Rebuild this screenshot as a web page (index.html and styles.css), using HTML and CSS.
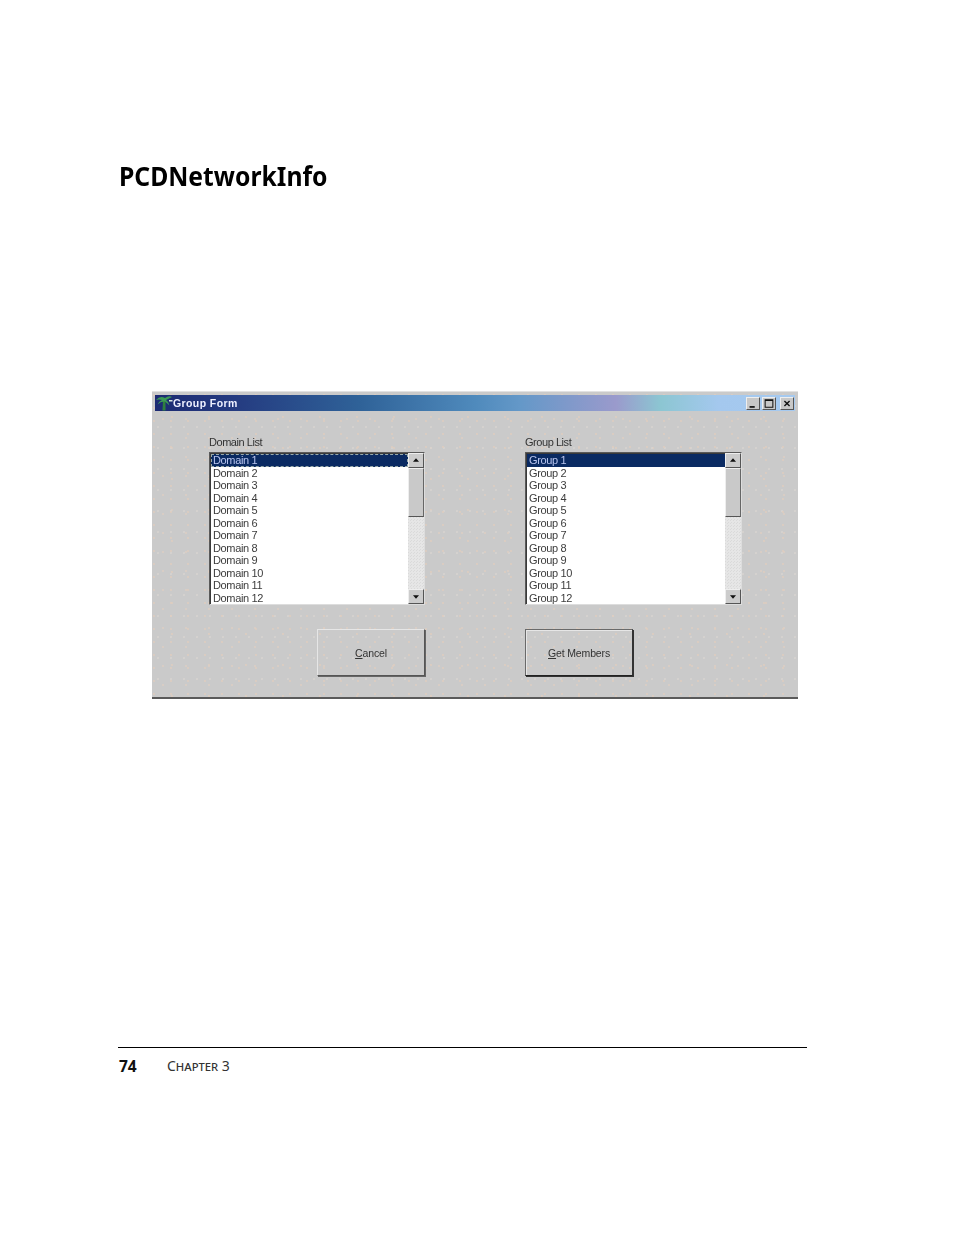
FILE: index.html
```html
<!DOCTYPE html>
<html lang="en">
<head>
<meta charset="utf-8">
<title>PCDNetworkInfo</title>
<link rel="stylesheet" href="styles.css">
</head>
<body>
<main class="page">
  <h1 class="heading">PCDNetworkInfo</h1>
  <section class="window">
    <header class="titlebar">
      <svg class="app-icon" viewBox="0 0 18 16" aria-hidden="true">
        <path d="M7.5 15.5 L8 6 L10.5 6 L10.5 15.5 Z" fill="#2f7f3f"/>
        <path d="M1 5 Q5 0.5 10 3 Q14 0 17 2 L11 5 Q14 7 14.5 10.5 L10 6.5 Q6 6 2.5 9.5 Q4 6 7 5 Q4 4 1 5 Z" fill="#3c9a55"/>
        <path d="M14 5 h3.5 v1.5 h-3.5 Z" fill="#d8e4e0"/>
      </svg>
      <span class="title-text">Group Form</span>
      <div class="controls">
        <span class="ctl"><svg viewBox="0 0 14 12"><path d="M3 9h6v2H3z" fill="#111"/></svg></span>
        <span class="ctl"><svg viewBox="0 0 14 12"><path d="M2.5 1.5h9v9h-9zM2.5 2.5h9" fill="none" stroke="#111" stroke-width="1.2"/></svg></span>
        <span class="ctl ctl-close"><svg viewBox="0 0 14 12"><path d="M4 3l6 6M10 3l-6 6" stroke="#111" stroke-width="1.6"/></svg></span>
      </div>
    </header>
    <div class="form-body">
      <div class="lists">
        <div class="field">
          <div class="field-label">Domain List</div>
          <div class="listbox">
            <ul class="items">
              <li class="item selected focused">Domain 1</li>
              <li class="item">Domain 2</li>
              <li class="item">Domain 3</li>
              <li class="item">Domain 4</li>
              <li class="item">Domain 5</li>
              <li class="item">Domain 6</li>
              <li class="item">Domain 7</li>
              <li class="item">Domain 8</li>
              <li class="item">Domain 9</li>
              <li class="item">Domain 10</li>
              <li class="item">Domain 11</li>
              <li class="item">Domain 12</li>
            </ul>
            <div class="scrollbar">
              <span class="sb-btn"><svg viewBox="0 0 15 15"><path d="M7.5 5L11 9H4z" fill="#111"/></svg></span>
              <span class="sb-thumb"></span>
              <span class="sb-track"></span>
              <span class="sb-btn"><svg viewBox="0 0 15 15"><path d="M7.5 10L11 6H4z" fill="#111"/></svg></span>
            </div>
          </div>
        </div>
        <div class="field">
          <div class="field-label">Group List</div>
          <div class="listbox">
            <ul class="items">
              <li class="item selected">Group 1</li>
              <li class="item">Group 2</li>
              <li class="item">Group 3</li>
              <li class="item">Group 4</li>
              <li class="item">Group 5</li>
              <li class="item">Group 6</li>
              <li class="item">Group 7</li>
              <li class="item">Group 8</li>
              <li class="item">Group 9</li>
              <li class="item">Group 10</li>
              <li class="item">Group 11</li>
              <li class="item">Group 12</li>
            </ul>
            <div class="scrollbar">
              <span class="sb-btn"><svg viewBox="0 0 15 15"><path d="M7.5 5L11 9H4z" fill="#111"/></svg></span>
              <span class="sb-thumb"></span>
              <span class="sb-track"></span>
              <span class="sb-btn"><svg viewBox="0 0 15 15"><path d="M7.5 10L11 6H4z" fill="#111"/></svg></span>
            </div>
          </div>
        </div>
      </div>
      <div class="actions">
        <button class="btn btn-cancel" type="button"><u>C</u>ancel</button>
        <button class="btn btn-default" type="button"><u>G</u>et Members</button>
      </div>
    </div>
  </section>
  <footer class="footer">
    <span class="page-no">74</span>
    <span class="chapter">Chapter 3</span>
  </footer>
</main>
</body>
</html>
```
FILE: styles.css
```css
* { box-sizing: border-box; }
html, body { margin: 0; padding: 0; background: #fff; }
body { width: 954px; height: 1235px; overflow: hidden; font-family: "Liberation Sans", sans-serif; }
.page { padding: 159px 147px 0 118px; display: flex; flex-direction: column; }

.heading {
  margin: 0 0 0 1px;
  font-family: "Noto Sans", sans-serif;
  font-weight: 700;
  font-size: 27px;
  line-height: 33px;
  color: #000;
  transform: scaleX(0.915);
  transform-origin: left center;
}

.window {
  margin: 199px 0 0 34px;
  width: 646px;
  height: 308px;
  padding: 3px 3px 0;
  background-color: #cacaca;
  background-image:
    radial-gradient(circle at 2px 3px, #dfcdbf 0.6px, transparent 1px),
    radial-gradient(circle at 11px 8px, #ddcec3 0.6px, transparent 1px),
    radial-gradient(circle at 6px 14px, #d8d4d0 0.6px, transparent 1px),
    radial-gradient(circle at 20px 25px, #dfcdbf 0.6px, transparent 1px);
  background-size: 17px 13px, 23px 19px, 13px 21px, 37px 31px;
  border-top: 1px solid #e2e2e2;
  border-bottom: 2px solid #5a5a5a;
  filter: blur(0.45px);
}

.titlebar {
  height: 16px;
  display: flex;
  align-items: center;
  background: linear-gradient(90deg, #1c2a72 0%, #243a80 12%, #2f6298 32%, #4f8abc 50%, #6498c8 57%, #9a9acc 72%, #8cc6d2 79%, #a4c8ee 88%, #a6caf0 100%);
}
.app-icon { width: 18px; height: 16px; flex: none; }
.title-text { color: #eef0ff; font-size: 10.5px; font-weight: 700; letter-spacing: 0.4px; }
.controls { margin-left: auto; display: flex; gap: 2px; padding-right: 1px; }
.controls .ctl-close { margin-left: 2px; }
.ctl {
  width: 14px; height: 13px;
  background: #c8c8c8;
  border: 1px solid;
  border-color: #eee #555 #555 #eee;
  display: flex;
}
.ctl svg { width: 100%; height: 100%; }

.form-body { padding: 24px 0 0 54px; }
.lists { display: flex; gap: 100px; }
.field { width: 216px; }
.field:last-child { width: 217px; }
.field-label { font-size: 11px; line-height: 14px; color: #333; margin-bottom: 3px; letter-spacing: -0.45px; }

.listbox {
  height: 153px;
  display: flex;
  background: #fff;
  border: 1px solid;
  border-color: #5a5a5a #ddd #ddd #5a5a5a;
  box-shadow: inset 1px 1px 0 #3a3a3a;
  overflow: hidden;
}
.items { list-style: none; margin: 0; padding: 1px 0 0 1px; flex: 1; min-width: 0; overflow: hidden; }
.item {
  height: 12.5px;
  line-height: 12.5px;
  padding-left: 2px;
  font-size: 11px;
  color: #3c3c3c;
  white-space: nowrap;
  letter-spacing: -0.35px;
}
.selected { background: #0a2a62; color: #b8c4ee; }
.focused { outline: 1px dashed #9aa; outline-offset: -1px; }

.scrollbar { width: 16px; flex: none; display: flex; flex-direction: column; background: #c9c9c9; }
.sb-btn {
  height: 15px; flex: none; display: flex;
  background: #ccc;
  border: 1px solid;
  border-color: #eee #555 #555 #eee;
}
.sb-btn svg { width: 100%; height: 100%; }
.sb-thumb {
  height: 49px; flex: none; background: #c9c9c9;
  border: 1px solid;
  border-color: #eee #666 #555 #eee;
}
.sb-track {
  flex: 1;
  background-color: #e6e6e6;
  background-image: linear-gradient(45deg, #dadada 25%, transparent 25%, transparent 75%, #dadada 75%);
  background-size: 3px 3px;
}

.actions { display: flex; margin: 24px 0 0 108px; gap: 99px; }
.btn {
  width: 108px;
  height: 47px;
  padding: 0;
  font-family: "Liberation Sans", sans-serif;
  font-size: 10.5px;
  color: #333;
  letter-spacing: -0.15px;
  background: transparent;
  border: 1px solid;
  border-color: #e6e6e6 #555 #555 #e6e6e6;
}
.btn-cancel { box-shadow: 1px 1px 0 #666; margin-right: 1px; }
.btn-default {
  border-color: #6a6a6a #333 #222 #6a6a6a;
  box-shadow: inset 1px 1px 0 #e6e6e6, 1px 1px 0 #333;
}

.footer {
  margin: 348px 0 0;
  width: 689px;
  height: 30px;
  border-top: 1px solid #000;
  display: flex;
  align-items: center;
  padding-top: 6px;
  font-family: "Noto Sans", sans-serif;
  color: #333;
}
.page-no { margin-left: 1px; width: 48px; font-size: 15.5px; font-weight: 700; color: #111; }
.chapter { font-size: 14px; font-variant: small-caps; }
```
